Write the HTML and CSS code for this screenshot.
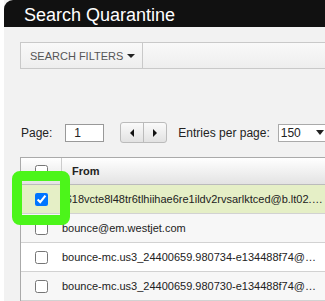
FILE: index.html
```html
<!DOCTYPE html>
<html lang="en">
<head>
    <meta charset="UTF-8">
    <meta name="viewport" content="width=device-width, initial-scale=1.0">
    <title>Search Quarantine</title>
    <link rel="stylesheet" href="styles.css">
</head>
<body>
    <div class="panel">
        <div class="title-bar">Search Quarantine</div>

        <div class="content">
            <div class="toolbar">
                <div class="filter-btn">SEARCH FILTERS <span class="caret"></span></div>
            </div>

            <div class="pager">
                <span class="label">Page:</span>
                <div class="page-input">1</div>
                <div class="nav-group">
                    <div class="nav-btn"><span class="tri-left"></span></div>
                    <div class="nav-btn"><span class="tri-right"></span></div>
                </div>
                <span class="label entries">Entries per page:</span>
                <div class="select-box">150 <span class="caret"></span></div>
            </div>

            <div class="grid">
                <div class="grid-head">
                    <div class="check-col head-check"><input type="checkbox"></div>
                    <div class="from-col">From</div>
                </div>
                <div class="grid-row selected">
                    <div class="check-col"><input type="checkbox" checked></div>
                    <div class="text-col">r618vcte8l48tr6tlhiihae6re1ildv2rvsarlktced@b.lt02.mail.example.com</div>
                </div>
                <div class="grid-row odd">
                    <div class="check-col"><input type="checkbox"></div>
                    <div class="text-col">bounce@em.westjet.com</div>
                </div>
                <div class="grid-row">
                    <div class="check-col"><input type="checkbox"></div>
                    <div class="text-col">bounce-mc.us3_24400659.980734-e134488f74@mail.example.com</div>
                </div>
                <div class="grid-row odd">
                    <div class="check-col"><input type="checkbox"></div>
                    <div class="text-col">bounce-mc.us3_24400659.980730-e134488f74@mail.example.com</div>
                </div>
            </div>
        </div>
    </div>

    <!-- annotation box around the selected checkbox -->
    <div class="highlight"></div>
</body>
</html>
```

FILE: styles.css
```css
body {
    margin: 0;
    background-color: #fff;
    font-family: 'Liberation Sans', Arial, sans-serif;
    color: #222;
    overflow: hidden;
    height: 301px;
}

.panel {
    margin-left: 4px;
    background-color: #f2f2f2;
    height: 301px;
}

.title-bar {
    height: 27px;
    box-sizing: border-box;
    padding: 4px 0 0 20px;
    line-height: 23px;
    font-size: 18px;
    color: #fff;
    background-color: #111;
    border-top-left-radius: 9px;
}

.content {
    padding: 15px 0 0 16px;
}

.toolbar {
    display: flex;
    height: 25px;
    margin-right: -20px;
    border: 1px solid #c9c9c9;
    background: linear-gradient(#f9f9f9, #eeeeee);
}

.filter-btn {
    display: flex;
    align-items: center;
    width: 122px;
    box-sizing: border-box;
    padding-left: 9px;
    border-right: 1px solid #c9c9c9;
    font-size: 11px;
    color: #555;
}

.caret {
    display: inline-block;
    margin-left: 4px;
    border-left: 4px solid transparent;
    border-right: 4px solid transparent;
    border-top: 4px solid #222;
}

.pager {
    display: flex;
    align-items: center;
    height: 21px;
    margin-top: 53px;
    margin-right: -40px;
    font-size: 12px;
    white-space: nowrap;
}

.pager > * {
    flex-shrink: 0;
}

.label {
    color: #222;
    margin-left: 1px;
}

.page-input {
    width: 39px;
    height: 18px;
    box-sizing: border-box;
    margin-left: 13px;
    padding-left: 8px;
    line-height: 16px;
    border: 1px solid #999;
    background-color: #fff;
}

.nav-group {
    display: flex;
    margin-left: 16px;
    height: 21px;
    border: 1px solid #bbb;
    border-radius: 3px;
    box-sizing: border-box;
    background: linear-gradient(#fafafa, #e2e2e2);
}

.nav-btn {
    width: 22px;
    display: flex;
    align-items: center;
    justify-content: center;
}

.nav-btn + .nav-btn {
    border-left: 1px solid #bbb;
}

.tri-left {
    border-top: 4px solid transparent;
    border-bottom: 4px solid transparent;
    border-right: 4px solid #111;
}

.tri-right {
    border-top: 4px solid transparent;
    border-bottom: 4px solid transparent;
    border-left: 4px solid #111;
}

.entries {
    margin-left: 11px;
}

.select-box {
    display: flex;
    align-items: center;
    margin-left: 8px;
    width: 60px;
    height: 18px;
    box-sizing: border-box;
    padding-left: 2px;
    border: 1px solid #aaa;
    background-color: #fff;
}

.select-box .caret {
    margin-left: 15px;
    border-left-width: 4px;
    border-right-width: 4px;
    border-top-width: 5px;
}

.grid {
    margin-top: 14px;
    margin-right: -20px;
    border: 1px solid #aaa;
    border-right: none;
    font-size: 11px;
}

.grid-head {
    display: flex;
    height: 26px;
    border-bottom: 1px solid #bbb;
    background: linear-gradient(#ffffff, #e3e3e3);
}

.check-col {
    width: 41px;
    display: flex;
    align-items: center;
    padding-left: 14px;
    box-sizing: border-box;
}

.check-col input {
    margin: 0;
    width: 13px;
    height: 13px;
}

.head-check {
    border-right: 1px solid #ccc;
}

.from-col {
    display: flex;
    align-items: center;
    padding-left: 10px;
    font-weight: bold;
}

.grid-row {
    display: flex;
    height: 28px;
    border-bottom: 1px solid #d2d2d2;
    background-color: #fff;
}

.grid-row.odd {
    background-color: #f7f7f7;
}

.grid-row.selected {
    background-color: #e5efc6;
}

.text-col {
    width: 262px;
    line-height: 28px;
    white-space: nowrap;
    overflow: hidden;
    text-overflow: ellipsis;
}

.highlight {
    position: absolute;
    left: 12px;
    top: 171px;
    width: 58px;
    height: 54px;
    box-sizing: border-box;
    border: 10px solid #4cf51a;
    border-radius: 8px;
    pointer-events: none;
}
```
